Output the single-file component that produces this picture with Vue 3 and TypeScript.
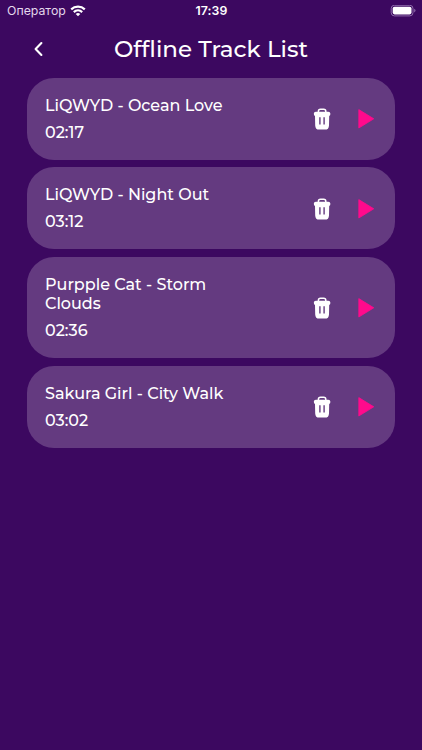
<script setup lang="ts">
interface Track {
  title: string
  duration: string
}

const tracks: Track[] = [
  { title: 'LiQWYD - Ocean Love', duration: '02:17' },
  { title: 'LiQWYD - Night Out', duration: '03:12' },
  { title: 'Purpple Cat - Storm Clouds', duration: '02:36' },
  { title: 'Sakura Girl - City Walk', duration: '03:02' },
]
</script>

<template>
  <div class="screen">
    <div class="status">
      <div class="carrier">
        <span>Оператор</span>
        <svg width="16" height="12" viewBox="0 0 16 12" fill="none" stroke="#fff" stroke-width="2.2">
          <path d="M1.2 4.4C5 .8 11 .8 14.8 4.4" />
          <path d="M3.8 7.1C6.2 4.9 9.8 4.9 12.2 7.1" />
          <path d="M8 11.3 5.7 8.9Q8 7.1 10.3 8.9Z" fill="#fff" stroke="none" />
        </svg>
      </div>
      <span class="clock">17:39</span>
      <svg class="battery" width="26" height="12" viewBox="0 0 26 12">
        <rect x="1.2" y=".3" width="21.8" height="10.6" rx="3.2" fill="none" stroke="#8f6cab" />
        <rect x="2.7" y="1.8" width="18.8" height="7.6" rx="1.8" fill="#fff" />
        <path d="M24.2 3.8v3.6Q25.5 6.8 25.5 5.6T24.2 3.8Z" fill="#8f6cab" />
      </svg>
    </div>
    <header class="header">
      <svg class="back" width="10" height="16" viewBox="0 0 10 16" fill="none" stroke="#fff" stroke-width="2.1" stroke-linecap="round" stroke-linejoin="round">
        <path d="M8.4 2 2.6 8l5.8 6" />
      </svg>
      <h1>Offline Track List</h1>
    </header>
    <main class="list">
      <article v-for="t in tracks" :key="t.title" class="card">
        <div class="info">
          <div class="title">{{ t.title }}</div>
          <div class="time">{{ t.duration }}</div>
        </div>
        <svg class="trash" width="18" height="22" viewBox="0 0 18 22">
          <path d="M5.4 4.4V3.4Q5.4 1.3 7.5 1.3h3.2Q12.8 1.3 12.8 3.4V4.4" fill="none" stroke="#fff" stroke-width="1.5" />
          <path fill="#fff" fill-rule="evenodd" d="M3 3.7h12.2Q17.4 3.7 17.4 5.7T16.2 8L16 17.4Q15.8 21.6 12.1 21.6H6.1Q2.4 21.6 2.2 17.4L2 8Q.8 7.8 .8 5.7T3 3.7ZM6.2 9.2v7.3h1.4V9.2ZM10.4 9.2v7.3h1.4V9.2Z" />
        </svg>
        <svg class="play" width="17" height="20" viewBox="0 0 17 20">
          <path d="M.8 .6 15.8 9.8 .8 19Z" fill="#ff0a8c" stroke="#ff0a8c" stroke-width=".8" stroke-linejoin="round" />
        </svg>
      </article>
    </main>
  </div>
</template>

<style>
body {
  margin: 0;
  background: #3c0860;
}
</style>

<style scoped>
.screen {
  height: 750px;
  overflow: hidden;
  background: #3c0860;
  color: #fff;
  font-family: Montserrat, Inter, sans-serif;
}
.status {
  display: grid;
  grid-template-columns: 1fr auto 1fr;
  align-items: center;
  height: 21px;
  padding: 0 6px 0 7px;
  font-family: Inter, sans-serif;
  font-size: 12.3px;
}
.carrier {
  display: flex;
  align-items: center;
  gap: 4.5px;
  color: #e3d7ec;
}
.clock {
  font-weight: 600;
  letter-spacing: 0.1px;
}
.battery {
  justify-self: end;
}
.header {
  display: grid;
  grid-template-columns: 80px 1fr 80px;
  align-items: center;
  height: 56.6px;
}
.back {
  margin-left: 33px;
}
h1 {
  margin: 0;
  font-size: 23px;
  font-weight: 500;
  text-align: center;
  white-space: nowrap;
}
.list {
  display: flex;
  flex-direction: column;
  gap: 7.5px;
  padding: 0 27px;
}
.card {
  display: flex;
  align-items: center;
  padding: 18.2px 20px 17.3px 18px;
  border-radius: 27px;
  background: #643a80;
  font-size: 16px;
  font-weight: 500;
  line-height: 19.5px;
}
.info {
  width: 190px;
}
.time {
  margin-top: 7.5px;
}
.trash {
  margin-left: auto;
}
.play {
  margin-left: 27px;
}
</style>
